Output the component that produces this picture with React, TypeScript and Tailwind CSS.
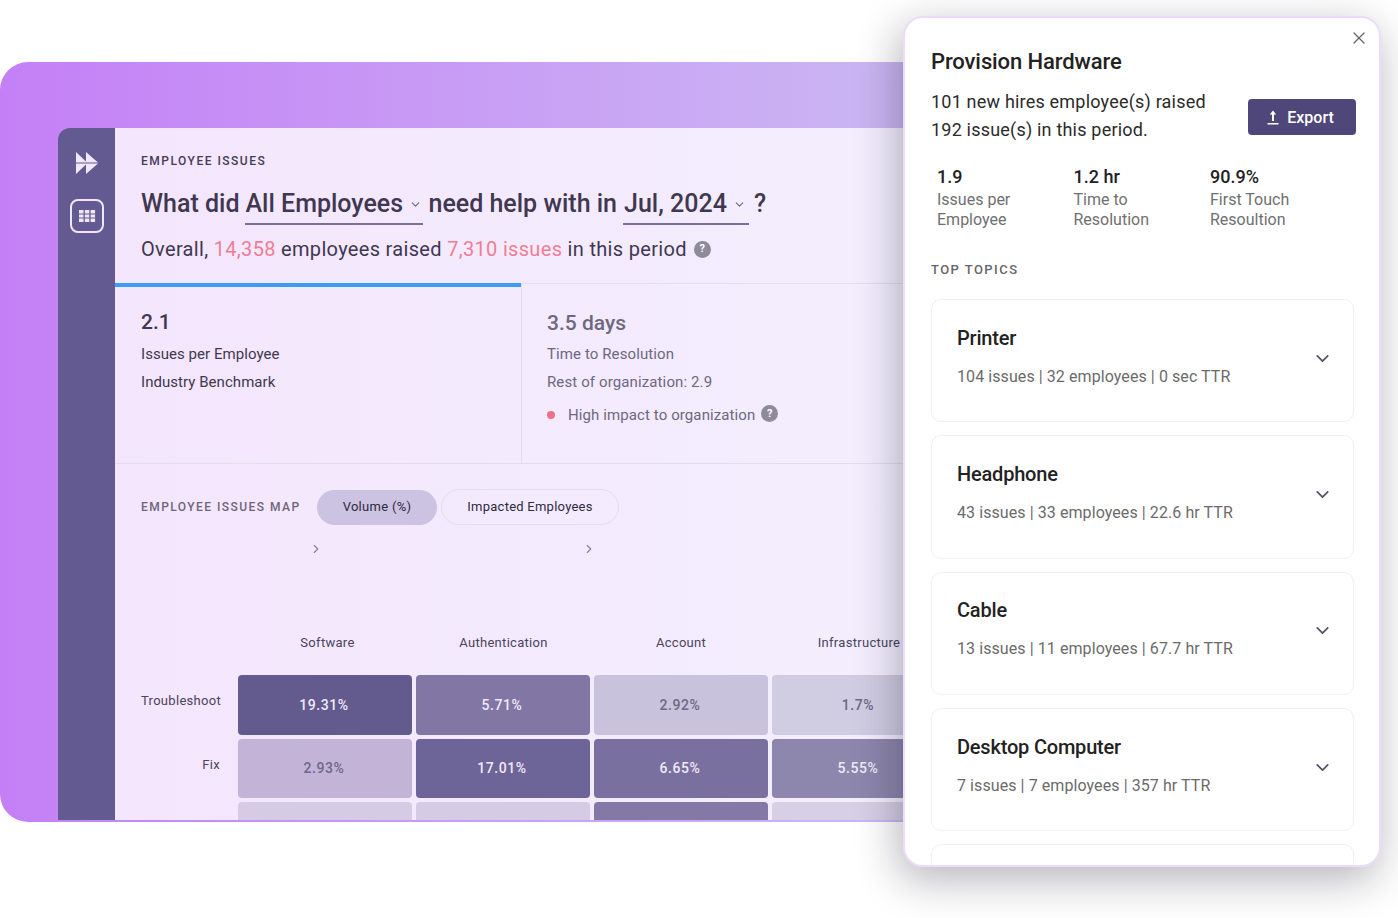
import React from "react";
import { ChevronDown, ChevronRight, X } from "lucide-react";

function Help() {
  return (
    <span className="inline-flex items-center justify-center rounded-full bg-[#8d8a9b] text-white font-bold w-[17px] h-[17px] text-[11px]">?</span>
  );
}

const cells = [
  [["19.31%", "bg-[#635a8e]", 1], ["5.71%", "bg-[#8176a4]", 1], ["2.92%", "bg-[#c9c2dc]", 0], ["1.7%", "bg-[#d0cce2]", 0]],
  [["2.93%", "bg-[#c3b4d7]", 0], ["17.01%", "bg-[#6d6498]", 1], ["6.65%", "bg-[#7a70a0]", 1], ["5.55%", "bg-[#8d86ad]", 1]],
  [["", "bg-[#d5cbe5]", 0], ["", "bg-[#d5cbe5]", 0], ["", "bg-[#8378a6]", 1], ["", "bg-[#d6cfe6]", 0]],
] as const;

const headers = [
  ["Software", "pl-[5px]"],
  ["Authentication", "pl-[1px]"],
  ["Account", "pl-0"],
  ["Infrastructure", "pl-0"],
];

const topics = [
  ["Printer", "104 issues | 32 employees | 0 sec TTR"],
  ["Headphone", "43 issues | 33 employees | 22.6 hr TTR"],
  ["Cable", "13 issues | 11 employees | 67.7 hr TTR"],
  ["Desktop Computer", "7 issues | 7 employees | 357 hr TTR"],
];

const stats = [
  ["1.9", "Issues per", "Employee"],
  ["1.2 hr", "Time to", "Resolution"],
  ["90.9%", "First Touch", "Resoultion"],
];

export default function App() {
  return (
    <div className="relative w-[1398px] h-[918px] overflow-hidden bg-white font-['Roboto',sans-serif]">
      <div className="pt-[62px] w-[960px]">
        <div className="h-[760px] rounded-l-[28px] overflow-hidden bg-gradient-to-r from-[#c47ff6] to-[#cbbaf2] pt-[66px] pl-[58px]">
          <div className="flex h-[692px] w-[902px] overflow-hidden rounded-tl-[12px]">
            <div className="w-[57px] shrink-0 bg-[#625a90] flex flex-col items-center pt-[23px]">
              <svg width="24" height="24" viewBox="0 0 24 24">
                <path d="M1 1 L12 11.6 H1 Z M1 12.4 H12 L1 23 Z M11 1 L23 11.6 H11 Z M11 12.4 H23 L11 23 Z" fill="#f1e8fb" />
              </svg>
              <div className="mt-[24px] w-[34px] h-[34px] rounded-[8px] border-2 border-[#efe6fa] flex items-center justify-center">
                <svg width="18" height="14" viewBox="0 0 18 14">
                  <path d="M1 1h4.5v3.4H1zM6.8 1h4.5v3.4H6.8zM12.6 1h4.5v3.4h-4.5zM1 5.4h4.5v3.2H1zM6.8 5.4h4.5v3.2H6.8zM12.6 5.4h4.5v3.2h-4.5zM1 9.6h4.5V13H1zM6.8 9.6h4.5V13H6.8zM12.6 9.6h4.5V13h-4.5z" fill="#efe6fa" />
                </svg>
              </div>
            </div>

            <div className="flex-1 min-w-0 bg-gradient-to-r from-[#f4e6fd] to-[#f3effe] text-[#3f3850]">
              <div className="h-[155px] pl-[26px] pt-[26px]">
                <div className="text-[12px] leading-[14px] font-medium tracking-[1.5px] text-[#443b58]">EMPLOYEE ISSUES</div>
                <div className="mt-[17px] flex items-start text-[25px] leading-[38px] font-medium text-[#3f3850] whitespace-nowrap">
                  <span className="mr-[6px]">What did</span>
                  <span className="flex items-start border-b-2 border-[#7a6f9b] h-[40px] w-[178px] shrink-0">
                    All Employees
                    <ChevronDown size={13} strokeWidth={2} className="ml-[6px] mt-[13px] text-[#6d6480]" />
                  </span>
                  <span className="ml-[5px] mr-[6px]">need help with in</span>
                  <span className="flex items-start border-b-2 border-[#7a6f9b] h-[40px] w-[126px] shrink-0 pl-[1px]">
                    Jul, 2024
                    <ChevronDown size={13} strokeWidth={2} className="ml-[6px] mt-[13px] text-[#6d6480]" />
                  </span>
                  <span className="ml-[5px]">?</span>
                </div>
                <div className="mt-[10px] flex items-center text-[20px] leading-[28px] whitespace-nowrap tracking-[0.32px]">
                  <span>Overall,&nbsp;</span>
                  <span className="text-[#ee7e94]">14,358</span>
                  <span>&nbsp;employees raised&nbsp;</span>
                  <span className="text-[#ee7e94]">7,310 issues</span>
                  <span>&nbsp;in this period</span>
                  <span className="ml-[7px] flex"><Help /></span>
                </div>
              </div>

              <div className="flex h-[181px] border-t border-b border-[#e3dcea]">
                <div className="w-[406px] shrink-0 border-t-[4px] border-[#3b9cf5] mt-[-1px] pl-[26px] pt-[22px] tracking-[0.05px]">
                  <div className="text-[21px] leading-[26px] font-medium text-[#3f3850]">2.1</div>
                  <div className="mt-[9px] text-[15px] leading-[20px]">Issues per Employee</div>
                  <div className="mt-[8px] text-[15px] leading-[20px]">Industry Benchmark</div>
                </div>
                <div className="flex-1 border-l border-[#e3dcea] pl-[25px] pt-[26px] text-[#6e687f]">
                  <div className="text-[21px] leading-[26px] font-medium">3.5 days</div>
                  <div className="mt-[8px] text-[15px] leading-[20px] tracking-[0.1px]">Time to Resolution</div>
                  <div className="mt-[8px] text-[15px] leading-[20px] tracking-[0.12px]">Rest of organization: 2.9</div>
                  <div className="mt-[13px] flex items-center text-[15px] leading-[20px]">
                    <span className="w-[8px] h-[8px] rounded-full bg-[#ee7088] mr-[13px]"></span>
                    <span className="tracking-[0.1px]">High impact to organization</span>
                    <span className="ml-[6px] mt-[-3px] flex"><Help /></span>
                  </div>
                </div>
              </div>

              <div className="pl-[26px]">
                <div className="flex items-center mt-[25px] h-[36px]">
                  <div className="w-[176px] text-[12px] font-medium tracking-[1.45px] text-[#6e6480] whitespace-nowrap">EMPLOYEE ISSUES MAP</div>
                  <div className="w-[120px] h-[35px] rounded-full bg-[#cbc3e1] flex items-center justify-center text-[13px] tracking-[0.3px] text-[#2f2a40]">Volume (%)</div>
                  <div className="ml-[4px] w-[178px] h-[36px] rounded-full border border-[#e5dcef] flex items-center justify-center text-[13px] tracking-[0.25px] text-[#2f2a40]">Impacted Employees</div>
                </div>
                <div className="flex mt-[17px] text-[#8a8496]">
                  <ChevronRight size={14} className="ml-[168px]" />
                  <ChevronRight size={14} className="ml-[259px]" />
                </div>
                <div className="mt-[79px] ml-[97px] flex gap-[4px] text-[13px] leading-[16px] tracking-[0.3px] text-[#4b4360]">
                  {headers.map(([h, p]) => (
                    <div key={h} className={`w-[174px] shrink-0 text-center whitespace-nowrap ${p}`}>{h}</div>
                  ))}
                </div>
                <div className="mt-[24px] flex flex-col gap-[4px]">
                  {cells.map((row, i) => (
                    <div key={i} className="flex items-start">
                      <div className="w-[79px] shrink-0 text-right text-[13px] leading-[16px] tracking-[0.3px] pt-[18px] text-[#4b4360]">
                        {["Troubleshoot", "Fix", ""][i]}
                      </div>
                      <div className="ml-[18px] flex gap-[4px]">
                        {row.map(([t, bg, dark], j) => (
                          <div key={j} className={`w-[174px] h-[59.5px] shrink-0 rounded-[4px] flex items-center justify-center pr-[2px] pt-[1px] text-[14px] font-medium tracking-[0.55px] ${bg} ${dark ? "text-[#f0eaf8]" : "text-[#6f6785]"}`}>{t}</div>
                        ))}
                      </div>
                    </div>
                  ))}
                </div>
              </div>
            </div>
          </div>
        </div>
      </div>

      <div className="absolute left-[903px] top-[16px] w-[478px] h-[851px] rounded-[20px] border-2 border-[#ecdcfb] bg-white shadow-[-4px_12px_44px_rgba(20,15,35,0.32)] overflow-hidden pl-[26px]">
        <X size={20} strokeWidth={1.5} className="absolute right-[10px] top-[10px] text-[#666]" />
        <div className="pt-[29px] text-[22px] leading-[30px] font-medium text-[#222] tracking-[-0.1px]">Provision Hardware</div>
        <div className="mt-[11px] flex items-start">
          <div className="w-[317px] shrink-0 text-[18px] leading-[28px] text-[#2b2b2b] tracking-[0.2px]">
            101 new hires employee(s) raised<br />192 issue(s) in this period.
          </div>
          <div className="mt-[11px] w-[108px] h-[36px] rounded-[4px] bg-[#4f4679] flex items-center justify-center pr-[3px] pt-[1px] text-white text-[16px] font-medium">
            <svg width="12" height="15" viewBox="0 0 12 15" className="mr-[8px] mb-[1px]">
              <path d="M6 0.5 L9.2 4.5 H7 V11 H5 V4.5 H2.8 Z M0.5 13 H11.5 V14.5 H0.5 Z" fill="#fff" />
            </svg>
            Export
          </div>
        </div>
        <div className="mt-[21px] ml-[6px] flex">
          {stats.map(([v, a, b]) => (
            <div key={v} className="w-[136.5px] shrink-0">
              <div className="text-[18px] leading-[24px] font-medium text-[#222]">{v}</div>
              <div className="mt-[1px] text-[16px] leading-[20px] text-[#707070]">{a}<br />{b}</div>
            </div>
          ))}
        </div>
        <div className="mt-[32px] text-[13px] leading-[16px] font-medium tracking-[1.45px] text-[#666]">TOP TOPICS</div>
        <div className="mt-[21px] w-[423px] flex flex-col gap-[13px]">
          {[...topics, ["", ""]].map(([t, s], i) => (
            <div key={i} className="h-[123.3px] shrink-0 rounded-[10px] border border-[#f0f0f3] pl-[25px] pt-[24.8px] flex items-start">
              <div className="flex-1">
                {t && <div className="text-[20px] leading-[26px] font-medium text-[#222] tracking-[-0.2px]">{t}</div>}
                {s && <div className="mt-[14px] text-[16px] leading-[24px] text-[#6b6b6b] tracking-[0.08px]">{s}</div>}
              </div>
              {t && <ChevronDown size={21} strokeWidth={2} className="mr-[20px] mt-[23px] text-[#55536a]" />}
            </div>
          ))}
        </div>
      </div>
    </div>
  );
}
